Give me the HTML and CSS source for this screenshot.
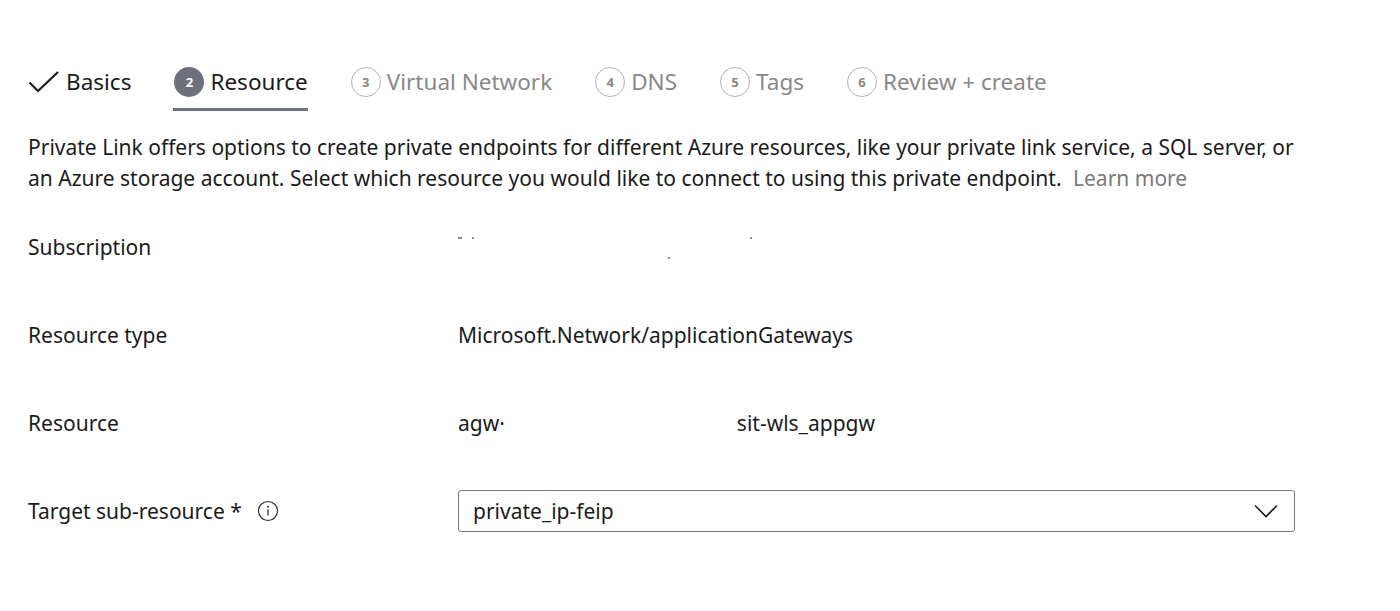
FILE: index.html
```html
<!DOCTYPE html>
<html lang="en">
<head>
<meta charset="utf-8">
<title>Create a private endpoint - Resource</title>
<link rel="stylesheet" href="styles.css">
</head>
<body>
<div class="page">
  <nav class="tabs">
    <div class="tab done">
      <svg class="check" width="32" height="24" viewBox="0 0 32 24"><path d="M1.5 12.5 L10 21 L30 2" fill="none" stroke="#1b1b1b" stroke-width="2.2"/></svg>
      <span class="tab-label">Basics</span>
    </div>
    <div class="tab active">
      <span class="num filled">2</span>
      <span class="tab-label">Resource</span>
    </div>
    <div class="tab">
      <span class="num">3</span>
      <span class="tab-label">Virtual Network</span>
    </div>
    <div class="tab">
      <span class="num">4</span>
      <span class="tab-label">DNS</span>
    </div>
    <div class="tab">
      <span class="num">5</span>
      <span class="tab-label">Tags</span>
    </div>
    <div class="tab">
      <span class="num">6</span>
      <span class="tab-label">Review + create</span>
    </div>
  </nav>

  <p class="intro">Private Link offers options to create private endpoints for different Azure resources, like your private link service, a SQL server, or<br>an Azure storage account. Select which resource you would like to connect to using this private endpoint. <a class="learn" href="#">Learn more</a></p>

  <div class="form">
    <div class="row">
      <div class="label">Subscription</div>
      <div class="value redacted"><span class="speck s1"></span><span class="speck s4"></span><span class="speck s2"></span><span class="speck s3"></span></div>
    </div>
    <div class="row">
      <div class="label">Resource type</div>
      <div class="value">Microsoft.Network/applicationGateways</div>
    </div>
    <div class="row">
      <div class="label">Resource</div>
      <div class="value"><span class="part1">agw·</span><span class="part2">sit-wls_appgw</span></div>
    </div>
    <div class="row">
      <div class="label">Target sub-resource *
        <svg class="info" width="22" height="22" viewBox="0 0 22 22"><circle cx="11" cy="11" r="9.5" fill="none" stroke="#323130" stroke-width="1.2"/><circle cx="11" cy="6.8" r="1" fill="#323130"/><path d="M11 9.5 V15.5" stroke="#323130" stroke-width="1.3"/></svg>
      </div>
      <div class="value">
        <div class="select">
          <span>private_ip-feip</span>
          <svg class="chev" width="24" height="14" viewBox="0 0 24 14"><path d="M1 1.5 L12 12.5 L23 1.5" fill="none" stroke="#1b1b1b" stroke-width="1.6"/></svg>
        </div>
      </div>
    </div>
  </div>
</div>
</body>
</html>
```
FILE: styles.css
```css
html, body {
  margin: 0;
  padding: 0;
  background: #ffffff;
}
body {
  font-family: "Noto Sans", "Open Sans", sans-serif;
  color: #1b1b1b;
  font-size: 21px;
}
.page {
  padding: 62px 0 0 28px;
}
.tabs {
  display: flex;
  align-items: flex-start;
  gap: 43px;
}
.tab {
  display: flex;
  align-items: center;
  gap: 6px;
  height: 40px;
  position: relative;
  color: #8a8886;
}
.tab.done, .tab.active {
  color: #1b1b1b;
}
.tab.active::after {
  content: "";
  position: absolute;
  left: -1px;
  right: 0;
  bottom: -9px;
  height: 3px;
  background: #6e727c;
}
.tab-label {
  font-size: 22.5px;
  line-height: 40px;
}
.check {
  display: block;
}
.num {
  width: 28px;
  height: 28px;
  border-radius: 50%;
  border: 1.5px solid #b0b0b0;
  display: flex;
  align-items: center;
  justify-content: center;
  font-size: 13px;
  font-weight: 700;
  color: #8a8886;
  box-sizing: content-box;
}
.num.filled {
  width: 30px;
  height: 30px;
  border: none;
  background: #6e717b;
  color: #ffffff;
}
.intro {
  margin: 30px 0 0 0;
  font-size: 21px;
  line-height: 31px;
  color: #1b1b1b;
}
.learn {
  color: #7a7a7a;
  text-decoration: none;
  margin-left: 6px;
}
.form {
  margin-top: 9px;
}
.row {
  display: grid;
  grid-template-columns: 430px 837px;
  align-items: center;
  height: 88px;
}
.label {
  display: flex;
  align-items: center;
}
.info {
  margin-left: 15px;
}
.value {
  position: relative;
}
.redacted {
  height: 30px;
}
.speck {
  position: absolute;
  width: 4px;
  height: 2px;
  background: #8d8d8d;
}
.s1 { left: 0; top: 5px; }
.s4 { left: 14px; top: 5px; width: 2px; }
.s2 { left: 292px; top: 5px; width: 2px; }
.s3 { left: 210px; top: 25px; width: 2px; }
.part2 {
  margin-left: 232px;
}
.select {
  box-sizing: border-box;
  height: 42px;
  border: 1px solid #7a7a7a;
  border-radius: 3px;
  display: flex;
  align-items: center;
  justify-content: space-between;
  padding: 0 16px 0 14px;
}
.chev {
  display: block;
}
```
